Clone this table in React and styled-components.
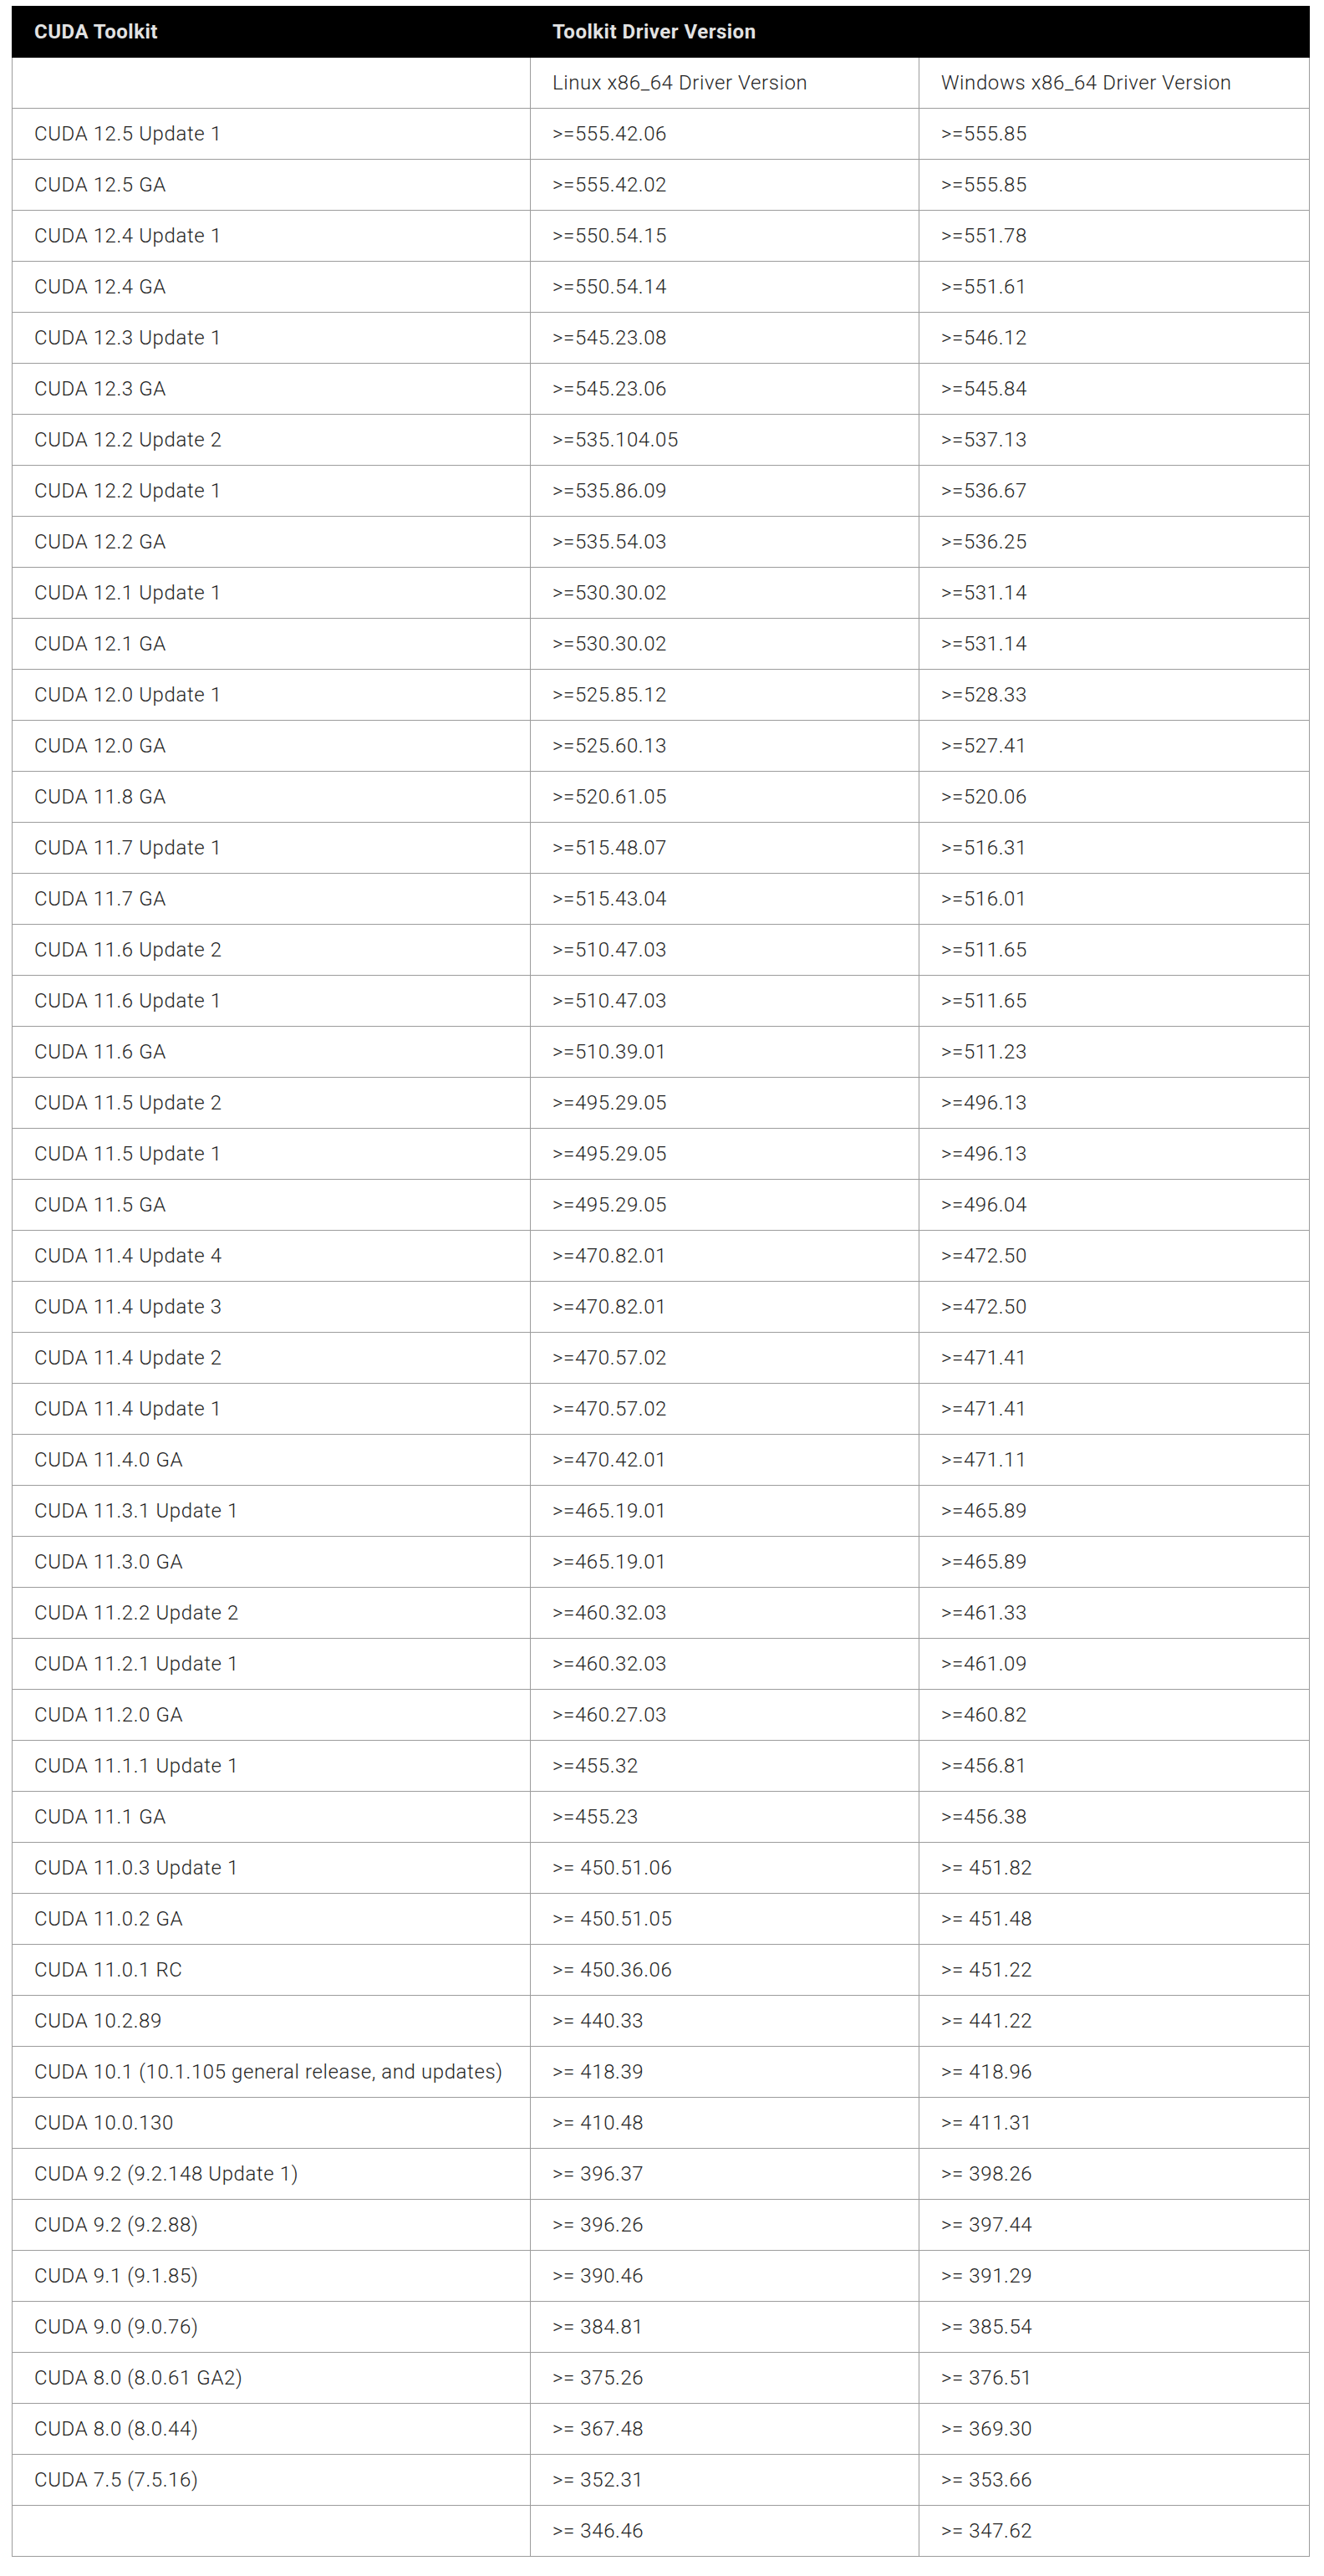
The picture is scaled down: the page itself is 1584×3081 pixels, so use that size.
import styled, { createGlobalStyle } from "styled-components";

const GlobalStyle = createGlobalStyle`
  html, body {
    margin: 0;
    padding: 0;
    background: #fff;
  }
  body {
    font-family: Roboto, "Liberation Sans", Arial, sans-serif;
  }
`;

const Page = styled.div`
  padding: 7px 19px 25px 14px;
`;

const Table = styled.table`
  width: 1552px;
  border-collapse: collapse;
  table-layout: fixed;
  font-size: 24px;
  color: #1f1f1f;
`;

const HeadCell = styled.th`
  height: 60px;
  padding: 0 26px;
  background: #000;
  color: #e2e2e2;
  font-weight: 700;
  text-align: left;
  letter-spacing: 0.5px;
  border: 1px solid #000;
  border-left: ${(p) => (p.$divider ? "1px solid #fff" : "1px solid #000")};
`;

const Cell = styled.td`
  height: 60px;
  padding: 0 26px;
  font-weight: 300;
  letter-spacing: 0.6px;
  border: 1px solid #9c9c9c;
  white-space: nowrap;
`;

const rows = [
  ["CUDA 12.5 Update 1", ">=555.42.06", ">=555.85"],
  ["CUDA 12.5 GA", ">=555.42.02", ">=555.85"],
  ["CUDA 12.4 Update 1", ">=550.54.15", ">=551.78"],
  ["CUDA 12.4 GA", ">=550.54.14", ">=551.61"],
  ["CUDA 12.3 Update 1", ">=545.23.08", ">=546.12"],
  ["CUDA 12.3 GA", ">=545.23.06", ">=545.84"],
  ["CUDA 12.2 Update 2", ">=535.104.05", ">=537.13"],
  ["CUDA 12.2 Update 1", ">=535.86.09", ">=536.67"],
  ["CUDA 12.2 GA", ">=535.54.03", ">=536.25"],
  ["CUDA 12.1 Update 1", ">=530.30.02", ">=531.14"],
  ["CUDA 12.1 GA", ">=530.30.02", ">=531.14"],
  ["CUDA 12.0 Update 1", ">=525.85.12", ">=528.33"],
  ["CUDA 12.0 GA", ">=525.60.13", ">=527.41"],
  ["CUDA 11.8 GA", ">=520.61.05", ">=520.06"],
  ["CUDA 11.7 Update 1", ">=515.48.07", ">=516.31"],
  ["CUDA 11.7 GA", ">=515.43.04", ">=516.01"],
  ["CUDA 11.6 Update 2", ">=510.47.03", ">=511.65"],
  ["CUDA 11.6 Update 1", ">=510.47.03", ">=511.65"],
  ["CUDA 11.6 GA", ">=510.39.01", ">=511.23"],
  ["CUDA 11.5 Update 2", ">=495.29.05", ">=496.13"],
  ["CUDA 11.5 Update 1", ">=495.29.05", ">=496.13"],
  ["CUDA 11.5 GA", ">=495.29.05", ">=496.04"],
  ["CUDA 11.4 Update 4", ">=470.82.01", ">=472.50"],
  ["CUDA 11.4 Update 3", ">=470.82.01", ">=472.50"],
  ["CUDA 11.4 Update 2", ">=470.57.02", ">=471.41"],
  ["CUDA 11.4 Update 1", ">=470.57.02", ">=471.41"],
  ["CUDA 11.4.0 GA", ">=470.42.01", ">=471.11"],
  ["CUDA 11.3.1 Update 1", ">=465.19.01", ">=465.89"],
  ["CUDA 11.3.0 GA", ">=465.19.01", ">=465.89"],
  ["CUDA 11.2.2 Update 2", ">=460.32.03", ">=461.33"],
  ["CUDA 11.2.1 Update 1", ">=460.32.03", ">=461.09"],
  ["CUDA 11.2.0 GA", ">=460.27.03", ">=460.82"],
  ["CUDA 11.1.1 Update 1", ">=455.32", ">=456.81"],
  ["CUDA 11.1 GA", ">=455.23", ">=456.38"],
  ["CUDA 11.0.3 Update 1", ">= 450.51.06", ">= 451.82"],
  ["CUDA 11.0.2 GA", ">= 450.51.05", ">= 451.48"],
  ["CUDA 11.0.1 RC", ">= 450.36.06", ">= 451.22"],
  ["CUDA 10.2.89", ">= 440.33", ">= 441.22"],
  ["CUDA 10.1 (10.1.105 general release, and updates)", ">= 418.39", ">= 418.96"],
  ["CUDA 10.0.130", ">= 410.48", ">= 411.31"],
  ["CUDA 9.2 (9.2.148 Update 1)", ">= 396.37", ">= 398.26"],
  ["CUDA 9.2 (9.2.88)", ">= 396.26", ">= 397.44"],
  ["CUDA 9.1 (9.1.85)", ">= 390.46", ">= 391.29"],
  ["CUDA 9.0 (9.0.76)", ">= 384.81", ">= 385.54"],
  ["CUDA 8.0 (8.0.61 GA2)", ">= 375.26", ">= 376.51"],
  ["CUDA 8.0 (8.0.44)", ">= 367.48", ">= 369.30"],
  ["CUDA 7.5 (7.5.16)", ">= 352.31", ">= 353.66"],
  ["", ">= 346.46", ">= 347.62"],
];

export default function App() {
  return (
    <>
      <GlobalStyle />
      <Page>
        <Table>
          <colgroup>
            <col style={{ width: 620 }} />
            <col style={{ width: 465 }} />
            <col style={{ width: 467 }} />
          </colgroup>
          <thead>
            <tr>
              <HeadCell>CUDA Toolkit</HeadCell>
              <HeadCell $divider colSpan={2}>
                Toolkit Driver Version
              </HeadCell>
            </tr>
          </thead>
          <tbody>
            <tr>
              <Cell />
              <Cell>Linux x86_64 Driver Version</Cell>
              <Cell>Windows x86_64 Driver Version</Cell>
            </tr>
            {rows.map((r, i) => (
              <tr key={i}>
                <Cell>{r[0]}</Cell>
                <Cell>{r[1]}</Cell>
                <Cell>{r[2]}</Cell>
              </tr>
            ))}
          </tbody>
        </Table>
      </Page>
    </>
  );
}
